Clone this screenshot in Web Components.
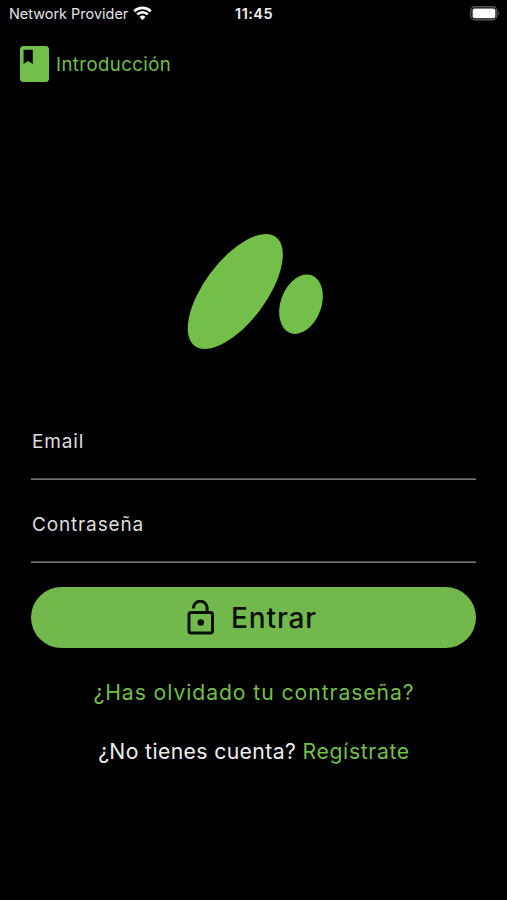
<!DOCTYPE html>
<html lang="es"><head><meta charset="utf-8"><title>Entrar</title>
<style>html,body{margin:0;background:#000}</style></head><body>
<login-screen></login-screen>
<script>
const define=(name,html)=>customElements.define(name,class extends HTMLElement{
  constructor(){super();this.attachShadow({mode:'open'}).innerHTML=html;}
});

define('status-bar',`<style>
:host{display:grid;grid-template-columns:1fr auto 1fr;height:28px;align-items:center;padding:0 8px 0 9px;box-sizing:border-box;color:#e4e4e4;font-size:14.4px;line-height:28px}
.net{display:flex;align-items:center;gap:5px;white-space:nowrap;letter-spacing:.03px}
.net svg{margin-bottom:2px}
.time{font-weight:600;color:#f0f0f0;letter-spacing:.5px}
.bat{justify-self:end;display:flex;margin-bottom:1px}
svg{display:block}
</style>
<div class="net"><span>Network Provider</span><svg width="19" height="14" viewBox="0 0 19 14" fill="none" stroke="#fff" stroke-width="2.6"><path d="M1.2 5.2a12 12 0 0 1 16.6 0M4.2 8.4a7.6 7.6 0 0 1 10.6 0"/><path d="M9.5 14 6.6 11a4.2 4.2 0 0 1 5.8 0z" fill="#fff" stroke="none"/></svg></div>
<div class="time">11:45</div>
<div class="bat"><svg width="29" height="15" viewBox="0 0 29 15"><rect x=".8" y=".8" width="26" height="13" rx="4" fill="none" stroke="#555" stroke-width="1.4"/><rect x="2.6" y="2.6" width="22.800" height="9.600" rx="2" fill="#fff"/><path d="M28 5.300q1.800 2 0 4z" fill="#666"/></svg></div>`);

define('intro-link',`<style>
:host{display:flex;align-items:center;gap:7px;padding:17px 0 0 20px;height:38px;color:#72bf4a;font-size:18.6px;letter-spacing:.42px}
svg{display:block}
</style><svg width="29" height="36" viewBox="0 0 29 36"><path fill="#72bf4a" fill-rule="evenodd" d="M3.5 0h22A3.5 3.5 0 0 1 29 3.5v29a3.5 3.5 0 0 1-3.5 3.5h-22A3.5 3.5 0 0 1 0 32.500v-29A3.5 3.5 0 0 1 3.500 0zM3.600 3.700v14.300l4.600-3 4.600 3V3.700z"/></svg><span><slot></slot></span>`);

define('brand-mark',`<style>:host{display:block;width:136px;height:116px}svg{display:block}</style>
<svg width="136" height="116" viewBox="187 234 136 116" fill="#74bf4a"><ellipse cx="235.300" cy="291.500" rx="30.900" ry="67.900" transform="rotate(36.700 235.300 291.500)"/><ellipse cx="301" cy="304.200" rx="20.300" ry="30.800" transform="rotate(20.400 301 304.200)"/></svg>`);

define('text-field',`<style>
:host{display:block;box-sizing:border-box;height:83px;padding:33px 0 0 1px;background:linear-gradient(#4c4c4c 0 1px,#757575 1px 2px) 0 100%/100% 2px no-repeat;color:#dedede;font-size:19px;line-height:24px;letter-spacing:.85px}
</style><slot></slot>`);

define('pill-button',`<style>
:host{display:flex;align-items:center;justify-content:center;gap:16px;height:61px;border-radius:31px;background:#72b84d;color:#071003;font-size:28px;font-weight:500;letter-spacing:.9px}
svg{display:block}
.label{padding-right:3px}
</style><svg width="28" height="36" viewBox="0 0 28 36" fill="none" stroke="#071003" stroke-width="3"><rect x="2" y="12.500" width="23.500" height="20.500" rx="2"/><path d="M6.500 8.500A6.800 6.800 0 0 1 20.100 7.500V12.500"/><circle cx="13.800" cy="22.500" r="3.300" fill="#071003" stroke="none"/></svg><span class="label"><slot></slot></span>`);

define('text-line',`<style>
:host{display:block;text-align:center;white-space:nowrap;color:#eee;font-size:21.2px;line-height:28px;letter-spacing:.38px}
::slotted(a){color:#72bf4a}
</style><slot></slot>`);

define('login-screen',`<style>
:host{display:flex;flex-direction:column;height:900px;background:#000;overflow:hidden;font-family:Inter,"Liberation Sans",sans-serif}
brand-mark{margin:151px 0 0 187px}
form{display:flex;flex-direction:column;margin:47px 31px 0}
pill-button{margin-top:24px}
.forgot{margin-top:30px;letter-spacing:.92px;padding-left:1px}
.reg{margin-top:31px;padding-left:1px}
.reg a{letter-spacing:.65px}
</style>
<status-bar></status-bar>
<intro-link>Introducción</intro-link>
<brand-mark></brand-mark>
<form><text-field>Email</text-field><text-field>Contraseña</text-field><pill-button>Entrar</pill-button></form>
<text-line class="forgot"><a>¿Has olvidado tu contraseña?</a></text-line>
<text-line class="reg">¿No tienes cuenta? <a>Regístrate</a></text-line>`);
</script></body></html>
